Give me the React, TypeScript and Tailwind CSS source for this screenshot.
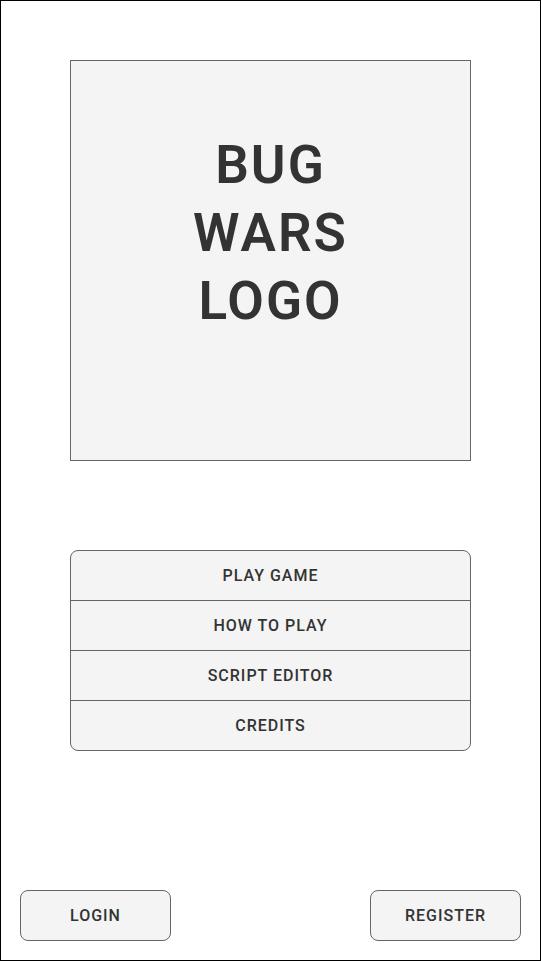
const font = { fontFamily: "Roboto, 'DejaVu Sans', sans-serif" };

const menuItems = ["PLAY GAME", "HOW TO PLAY", "SCRIPT EDITOR", "CREDITS"];

export default function App() {
  return (
    <div
      className="w-[541px] h-[961px] border border-black bg-white flex flex-col text-[#333333]"
      style={font}
    >
      <div className="mt-[59px] ml-[69px] w-[401px] h-[401px] border border-[#666666] bg-[#f4f4f4] flex flex-col items-center pt-[70px]">
        <div className="text-[53px] leading-[68px] font-semibold tracking-[2px] text-center text-[#333333]">
          <div>BUG</div>
          <div>WARS</div>
          <div>LOGO</div>
        </div>
      </div>

      <div className="mt-[89px] ml-[69px] w-[401px] rounded-[8px] border border-[#666666] bg-[#f4f4f4] divide-y divide-[#666666] overflow-hidden">
        {menuItems.map((item) => (
          <button
            key={item}
            className="w-full h-[50px] last:h-[49px] flex items-center justify-center text-[16px] font-medium tracking-[1px]"
          >
            {item}
          </button>
        ))}
      </div>

      <div className="mt-auto mb-[19px] mx-[19px] flex justify-between">
        <button className="w-[151px] h-[51px] rounded-[8px] border border-[#666666] bg-[#f4f4f4] text-[16px] font-medium tracking-[1px]">
          LOGIN
        </button>
        <button className="w-[151px] h-[51px] rounded-[8px] border border-[#666666] bg-[#f4f4f4] text-[16px] font-medium tracking-[1px]">
          REGISTER
        </button>
      </div>
    </div>
  );
}
